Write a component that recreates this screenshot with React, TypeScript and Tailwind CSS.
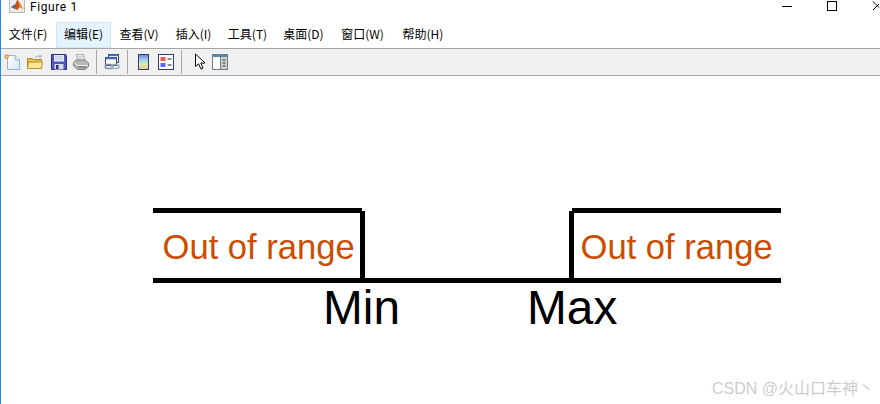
import React from "react";

const menus: [string, number][] = [
  ["文件(F)", 56],
  ["编辑(E)", 55],
  ["查看(V)", 56],
  ["插入(I)", 53],
  ["工具(T)", 55],
  ["桌面(D)", 57],
  ["窗口(W)", 61],
  ["帮助(H)", 60],
];

function Logo() {
  return (
    <svg width="16" height="16" viewBox="0 0 16 16">
      <rect x="0.5" y="0.5" width="15" height="15" fill="#ececec" stroke="#b8b8b8" />
      <path d="M2 10 L6 7.5 L8.5 2.5 L12 8 L14 12 L11 10 L8 13 Z" fill="#c9501a" />
      <path d="M8.5 2.5 L10.5 9 L8 13 L11 10 L14 12 Z" fill="#e8901c" />
      <path d="M2 10 L6 7.5 L7.5 9 L5 11.5 Z" fill="#3f6fb0" />
    </svg>
  );
}

function NewIcon() {
  return (
    <svg width="16" height="16" viewBox="0 0 16 16">
      <defs>
        <linearGradient id="pg" x1="0" y1="0" x2="1" y2="1">
          <stop offset="0" stopColor="#ffffff" />
          <stop offset="1" stopColor="#d8e9f8" />
        </linearGradient>
      </defs>
      <path d="M3.5 1.5 H11 L15.5 6 V15.5 H3.5 Z" fill="url(#pg)" stroke="#8fb4d4" />
      <path d="M11 1.5 V6 H15.5" fill="#e4f0fa" stroke="#8fb4d4" />
      <circle cx="2.6" cy="2.6" r="2.3" fill="#f08a3c" />
      <circle cx="2.6" cy="2.6" r="1" fill="#ffe9a8" />
    </svg>
  );
}

function OpenIcon() {
  return (
    <svg width="16" height="16" viewBox="0 0 16 16">
      <path d="M8 3.5 Q11 0.5 14 2.5 M14 0.8 V3 H11.8" fill="none" stroke="#9fb0bc" />
      <path d="M0.5 14.5 V4.5 H5.5 L6.5 5.5 H14.5 V14.5 Z" fill="#e3bd52" stroke="#a9892e" />
      <path d="M0.5 14.5 L1.5 8 H15.5 L14.5 14.5 Z" fill="#fbe698" stroke="#b3922f" />
    </svg>
  );
}

function SaveIcon() {
  return (
    <svg width="16" height="16" viewBox="0 0 16 16">
      <path d="M0.5 0.5 H14.5 L15.5 1.5 V15.5 H0.5 Z" fill="#5058bc" stroke="#2b2f78" />
      <rect x="3" y="1" width="10" height="6.5" fill="#e6ebfa" />
      <path d="M4 3 H12 M4 5 H12" stroke="#b9c2e0" />
      <rect x="3.5" y="10" width="9" height="5.5" fill="#d8dbe4" />
      <rect x="5" y="11" width="2.5" height="4" fill="#2b2f78" />
    </svg>
  );
}

function PrintIcon() {
  return (
    <svg width="16" height="16" viewBox="0 0 16 16">
      <path d="M3.5 0.5 H10.5 L12 6.5 H4.5 Z" fill="#e8edf2" stroke="#a7b0b8" />
      <path d="M5 2.5 H10 M5.5 4.5 H10.5" stroke="#c4ccd4" />
      <path d="M0.5 8.5 L3.5 6 H12 L15.5 9 V12.5 L12 15.5 H5 L0.5 12 Z" fill="#b8b8b8" stroke="#7c7c7c" />
      <path d="M1 9 L5 11.5 H15" fill="none" stroke="#ececec" />
      <path d="M5 13 H13" stroke="#5c5c5c" />
    </svg>
  );
}

function LinkIcon() {
  return (
    <svg width="16" height="16" viewBox="0 0 16 16">
      <rect x="4.5" y="0.5" width="10" height="8" fill="#f2f6fb" stroke="#2c4684" />
      <rect x="4.5" y="0.5" width="10" height="1.6" fill="#4a6eb0" />
      <rect x="1.5" y="3.5" width="11" height="8" fill="#fbfcfe" stroke="#2c4684" />
      <rect x="1.5" y="3.5" width="11" height="1.8" fill="#4a6eb0" />
      <rect x="1.2" y="10.4" width="7.5" height="4" rx="2" fill="none" stroke="#7f8f9e" strokeWidth="1.5" />
      <rect x="7.5" y="10.4" width="7.5" height="4" rx="2" fill="none" stroke="#a0afbe" strokeWidth="1.5" />
    </svg>
  );
}

function ColorbarIcon() {
  return (
    <svg width="14" height="16" viewBox="0 0 14 16">
      <defs>
        <linearGradient id="cb" x1="0" y1="0" x2="0" y2="1">
          <stop offset="0" stopColor="#7a78d8" />
          <stop offset="0.35" stopColor="#94d4ec" />
          <stop offset="0.65" stopColor="#dcecac" />
          <stop offset="1" stopColor="#f6c090" />
        </linearGradient>
      </defs>
      <rect x="1.5" y="0.5" width="10" height="15" fill="url(#cb)" stroke="#2f3c78" />
    </svg>
  );
}

function LegendIcon() {
  return (
    <svg width="16" height="16" viewBox="0 0 16 16">
      <rect x="0.5" y="0.5" width="15" height="15" fill="#fff" stroke="#2f3c78" />
      <rect x="2.5" y="3" width="5" height="4" fill="#f05a5a" />
      <rect x="2.5" y="9" width="5" height="4" fill="#5a6ae8" />
      <path d="M9.5 5 H13.5 M9.5 11 H13.5" stroke="#222" />
    </svg>
  );
}

function PointerIcon() {
  return (
    <svg width="12" height="17" viewBox="0 0 12 17">
      <path d="M1.5 1 V13.5 L4.5 10.8 L7 16 L9 15 L6.8 10 H11 Z" fill="#fff" stroke="#000" />
    </svg>
  );
}

function PanelIcon() {
  return (
    <svg width="16" height="16" viewBox="0 0 16 16">
      <rect x="0.5" y="0.5" width="15" height="15" fill="#fff" stroke="#6b7b88" />
      <rect x="1" y="1" width="14" height="2" fill="#5b86a8" />
      <rect x="8" y="3" width="7" height="12" fill="#d0d0d0" />
      <path d="M8.5 3 V15" stroke="#6b7b88" />
      <path d="M10.5 6 H13.5 M10.5 9 H13.5 M10.5 12 H13.5" stroke="#333" />
    </svg>
  );
}

function Sep() {
  return <div className="w-px h-[24px] bg-[#a8a8a8]" />;
}

export default function App() {
  return (
    <div
      className="relative w-[880px] h-[404px] overflow-hidden bg-white border-l border-[#1c8cf0] flex flex-col text-black"
      style={{ fontFamily: '"Liberation Sans", "Noto Sans CJK SC", sans-serif' }}
    >
      <div className="h-[22px] flex items-start shrink-0">
        <div className="ml-[8px] -mt-[3px]"><Logo /></div>
        <span className="ml-[5px] text-[12px] leading-[15px] tracking-[0.6px]" style={{ fontFamily: 'Roboto, sans-serif' }}>Figure 1</span>
        <div className="ml-auto">
          <svg width="100" height="14" viewBox="0 0 100 14" className="block">
            <path d="M2 6.5 H12" stroke="#000" />
            <rect x="47.5" y="1.5" width="9" height="9" fill="none" stroke="#000" />
            <path d="M93 1.5 L99 7.5 M93 10 L99 4" stroke="#000" />
          </svg>
        </div>
      </div>
      <div className="h-[26px] flex items-stretch shrink-0 -ml-px">
        {menus.map(([label, w], i) => (
          <div
            key={label}
            className={
              i === 1
                ? "flex items-center justify-center pb-[2px] text-[12px] bg-[#e5f3ff] border border-[#cce8ff]"
                : "flex items-center justify-center pb-[2px] text-[12px]"
            }
            style={{ width: w, fontFamily: '"Noto Sans CJK SC", sans-serif' }}
          >
            {label}
          </div>
        ))}
      </div>
      <div className="h-[28px] shrink-0 flex items-center bg-[#f0f0f0] border-t border-b border-[#a5a5a5] pl-[4px] -ml-px pb-[1px]">
        <NewIcon />
        <div className="ml-[7px]"><OpenIcon /></div>
        <div className="ml-[8px]"><SaveIcon /></div>
        <div className="ml-[6px]"><PrintIcon /></div>
        <div className="ml-[7px]"><Sep /></div>
        <div className="ml-[7px]"><LinkIcon /></div>
        <div className="ml-[7px]"><Sep /></div>
        <div className="ml-[9px]"><ColorbarIcon /></div>
        <div className="ml-[7px]"><LegendIcon /></div>
        <div className="ml-[7px]"><Sep /></div>
        <div className="ml-[12px]"><PointerIcon /></div>
        <div className="ml-[6px]"><PanelIcon /></div>
      </div>
      <div className="relative flex-1">
        <svg width="880" height="328" viewBox="0 76 880 328" className="absolute -left-px top-0">
          <g fill="#000">
            <rect x="153" y="208" width="209" height="5" />
            <rect x="360" y="211" width="5" height="70" />
            <rect x="153" y="278" width="628" height="5" />
            <rect x="569" y="211" width="5" height="70" />
            <rect x="572" y="208" width="209" height="5" />
          </g>
          <g fontFamily='"Liberation Sans", sans-serif'>
            <text x="162.5" y="259" fontSize="34.6" fill="#cc4c00">Out of range</text>
            <text x="580.5" y="259" fontSize="34.6" fill="#cc4c00">Out of range</text>
            <text x="323" y="324" fontSize="47.8" fill="#000">Min</text>
            <text x="527" y="324" fontSize="47.8" fill="#000">Max</text>
          </g>
        </svg>
        <span
          className="absolute left-[711px] bottom-[3px] text-[16px] text-[#cdcdcd] whitespace-nowrap"
          style={{ fontFamily: '"Liberation Sans", "Noto Sans CJK SC", sans-serif' }}
        >
          CSDN @火山口车神丶
        </span>
      </div>
    </div>
  );
}
